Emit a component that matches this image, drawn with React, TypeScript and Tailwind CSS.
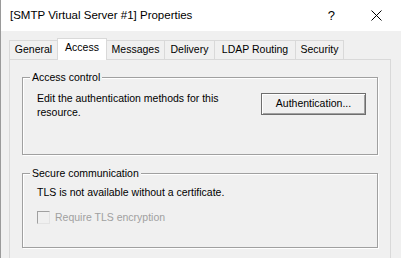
import React from "react";

const tabs = [
  { label: "General", w: "w-[49px]" },
  { label: "Access", w: "w-[50px]", selected: true },
  { label: "Messages", w: "w-[59px]" },
  { label: "Delivery", w: "w-[51px]" },
  { label: "LDAP Routing", w: "w-[82px]" },
  { label: "Security", w: "w-[49px]" },
];

function GroupBox({
  title,
  className,
  children,
}: {
  title: string;
  className: string;
  children: React.ReactNode;
}) {
  return (
    <div
      className={`relative border border-[#a0a0a0] shadow-[inset_1px_1px_0_#ffffff,1px_1px_0_#ffffff] ${className}`}
    >
      <span className="absolute left-[7px] top-[-8px] bg-[#f0f0f0] px-[2px] leading-[14px]">
        {title}
      </span>
      {children}
    </div>
  );
}

export default function App() {
  return (
    <div className="w-[401px] h-[258px] overflow-hidden bg-[#f0f0f0] flex flex-col border-l border-[#9a9a9a] font-['Liberation_Sans',Arial,sans-serif] text-black">
      {/* Title bar */}
      <div className="h-[31px] bg-white flex items-center shrink-0">
        <span className="ml-[9px] text-[11.5px] leading-none">
          [SMTP Virtual Server #1] Properties
        </span>
        <span className="ml-auto mr-[36px] text-[13px] leading-none">?</span>
        <svg width="11" height="11" viewBox="0 0 11 11" className="mr-[19px]">
          <path d="M0.5 0.5 L10.5 10.5 M10.5 0.5 L0.5 10.5" stroke="#000" strokeWidth="1" />
        </svg>
      </div>

      {/* Body */}
      <div className="flex-1 pl-[8px] pt-[7px] text-[10.5px]">
        {/* Tab strip */}
        <div className="flex items-end h-[21px]">
          {tabs.map((t, i) => (
            <div
              key={t.label}
              className={`${t.w} ${i > 0 ? "-ml-px" : ""} flex items-center justify-center border-t border-l border-r border-[#d9d9d9] ${
                t.selected
                  ? "h-[22px] bg-white relative z-10 -mb-px pb-[3px]"
                  : "h-[19px] bg-[#f0f0f0]"
              }`}
            >
              {t.label}
            </div>
          ))}
        </div>

        {/* Tab panel */}
        <div className="w-[382px] h-[210px] border border-[#d9d9d9] bg-[#f0f0f0] pl-[12px] pt-[17px]">
          <GroupBox title="Access control" className="w-[356px] h-[78px]">
            <div className="flex pl-[14px] pr-[11px] pt-[13px]">
              <div className="leading-[14px]">
                Edit the authentication methods for this
                <br />
                resource.
              </div>
              <button className="ml-auto mt-[2px] w-[105px] h-[22px] bg-[#f0f0f0] border border-[#6e6e6e] shadow-[inset_1px_1px_0_#ffffff,inset_-1px_-1px_0_#a0a0a0] flex items-center justify-center">
                Authentication...
              </button>
            </div>
          </GroupBox>

          <GroupBox title="Secure communication" className="w-[356px] h-[75px] mt-[18px]">
            <div className="pl-[14px] pt-[11px]">
              <div className="leading-[14px]">TLS is not available without a certificate.</div>
              <div className="flex items-center mt-[11px]">
                <div className="w-[13px] h-[13px] border border-[#a0a0a0] border-r-[#e3e3e3] border-b-[#e3e3e3] bg-[#f0f0f0]" />
                <span className="ml-[5px] text-[#a0a0a0] leading-[14px]">
                  Require TLS encryption
                </span>
              </div>
            </div>
          </GroupBox>
        </div>
      </div>
    </div>
  );
}
